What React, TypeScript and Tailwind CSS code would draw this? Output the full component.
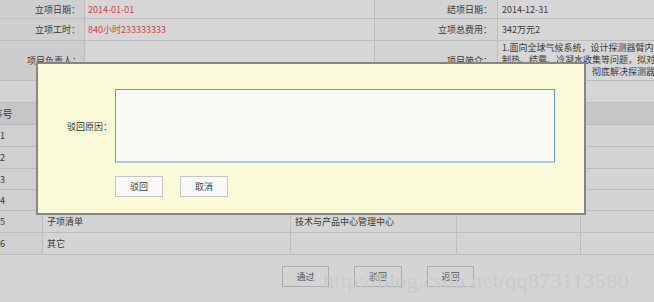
import React from "react";

const font = "font-['Noto_Sans_CJK_SC','Liberation_Sans',sans-serif]";

const rows = [
  { no: '1', name: '项目任务书', dept: '' },
  { no: '2', name: '项目计划书', dept: '' },
  { no: '3', name: '技术方案', dept: '' },
  { no: '4', name: '预算清单', dept: '' },
  { no: '5', name: '子项清单', dept: '技术与产品中心管理中心' },
  { no: '6', name: '其它', dept: '' },
];
const rowH = ['h-[22px]', 'h-[22px]', 'h-[21px]', 'h-[21px]', 'h-[22px]', 'h-[22px]'];

const App = () => {
  return (
    <div className={`relative w-[654px] h-[302px] overflow-hidden bg-[#d4d4d4] text-[9px] leading-none text-[#3a3a3a] ${font}`}>
      {/* project info */}
      <div className="grid grid-cols-[85px_290px_123px_1fr]">
        <div className="h-[19px] flex items-center justify-end pr-1 bg-[#cfcfcf] border-r border-b border-[#bcbcbc]">立项日期：</div>
        <div className="h-[19px] flex items-center pl-[3px] text-[#d24545] bg-[#d6d6d6] border-r border-b border-[#bcbcbc]">2014-01-01</div>
        <div className="h-[19px] flex items-center justify-end pr-[5px] bg-[#d3d3d3] border-r border-b border-[#bcbcbc]">结项日期：</div>
        <div className="h-[19px] flex items-center pl-1 bg-[#d6d6d6] border-b border-[#bcbcbc]">2014-12-31</div>

        <div className="h-[22px] flex items-center justify-end pr-1 bg-[#cfcfcf] border-r border-b border-[#bcbcbc]">立项工时：</div>
        <div className="h-[22px] flex items-center pl-[3px] text-[#d24545] bg-[#d6d6d6] border-r border-b border-[#bcbcbc]">840小时233333333</div>
        <div className="h-[22px] flex items-center justify-end pr-[5px] bg-[#d3d3d3] border-r border-b border-[#bcbcbc]">立项总费用：</div>
        <div className="h-[22px] flex items-center pl-1 bg-[#d6d6d6] border-b border-[#bcbcbc]">342万元2</div>

        <div className="h-[40px] flex items-center justify-end pr-[3px] bg-[#cdcdcd] border-r border-b border-[#bcbcbc]">项目负责人：</div>
        <div className="h-[40px] bg-[#d6d6d6] border-r border-b border-[#bcbcbc]"></div>
        <div className="h-[40px] flex items-center justify-end pr-[5px] bg-[#d3d3d3] border-r border-b border-[#bcbcbc]">项目简介：</div>
        <div className="h-[40px] pl-1 pt-px leading-[12px] whitespace-nowrap overflow-hidden bg-[#d6d6d6] border-b border-[#bcbcbc]">
          <div>1.面向全球气候系统，设计探测器臂内的温控结构</div>
          <div>制热、结露、冷凝水收集等问题，拟对探测器臂</div>
          <div>进行全面优化与改进，彻底解决探测器臂内</div>
        </div>

        <div className="h-[22px] bg-[#d3d3d3] border-r border-b border-[#bcbcbc]"></div>
        <div className="h-[22px] bg-[#d5d5d5] border-r border-b border-[#bcbcbc]"></div>
        <div className="h-[22px] bg-[#d5d5d5] border-r border-b border-[#bcbcbc]"></div>
        <div className="h-[22px] bg-[#d5d5d5] border-b border-[#bcbcbc]"></div>
      </div>

      {/* sub items */}
      <div className="-ml-[37px] grid grid-cols-[80px_248px_166px_124px_1fr]">
        <div className="h-[22px] flex items-center justify-center text-[10px] bg-[#c6c6c6] border-r border-b border-[#b8b8b8]">序号</div>
        <div className="h-[22px] flex items-center justify-center bg-[#c6c6c6] border-r border-b border-[#b8b8b8]">名称</div>
        <div className="h-[22px] flex items-center justify-center bg-[#c6c6c6] border-r border-b border-[#b8b8b8]">负责部门</div>
        <div className="h-[22px] bg-[#c6c6c6] border-r border-b border-[#b8b8b8]"></div>
        <div className="h-[22px] bg-[#c6c6c6] border-b border-[#b8b8b8]"></div>
        {rows.map((r, i) => (
          <React.Fragment key={r.no}>
            <div className={`${rowH[i]} flex items-center justify-center bg-[#d0d0d0] border-r border-b border-[#bcbcbc]`}>{r.no}</div>
            <div className={`${rowH[i]} flex items-center pl-1 border-r border-b border-[#bcbcbc]`}>{r.name}</div>
            <div className={`${rowH[i]} flex items-center pl-1 border-r border-b border-[#bcbcbc]`}>{r.dept}</div>
            <div className={`${rowH[i]} border-r border-b border-[#bcbcbc]`}></div>
            <div className={`${rowH[i]} border-b border-[#bcbcbc]`}></div>
          </React.Fragment>
        ))}
      </div>

      <div className="flex gap-[25px] pl-[282px] mt-[11px] text-[#555]">
        <button className="w-[47px] h-[21px] border border-[#acacac] text-[9px]">通过</button>
        <button className="w-[48px] h-[21px] border border-[#acacac] text-[9px]">驳回</button>
        <button className="w-[47px] h-[21px] border border-[#acacac] text-[9px]">返回</button>
      </div>

      {/* watermark */}
      <div className="absolute left-[323px] top-[270px] text-[22px] leading-[22px] tracking-[0.3px] text-[#cacaca] font-['Liberation_Serif',serif] pointer-events-none">
        http://blog.csdn.net/qq873113580
      </div>

      {/* reject dialog */}
      <div className="absolute left-[36px] top-[62px] w-[550px] h-[153px] bg-[#fafad8] border-2 border-[#868686] pt-[25px]">
        <div className="flex items-center">
          <div className="w-[77px] text-right pr-[3px] text-[#333]">驳回原因：</div>
          <textarea className="w-[440px] h-[74px] resize-none outline-none bg-[#f8f9f3] border border-[#5ba3da] border-b-2 border-b-[#a9cde6]" />
        </div>
        <div className="flex gap-[17px] ml-[77px] mt-[13px] text-[#444]">
          <button className="w-[48px] h-[21px] bg-[#f8f8f6] border border-[#c6c6c6] text-[9px]">驳回</button>
          <button className="w-[48px] h-[21px] bg-[#f8f8f6] border border-[#c6c6c6] text-[9px]">取消</button>
        </div>
      </div>
    </div>
  );
};

export default App;
